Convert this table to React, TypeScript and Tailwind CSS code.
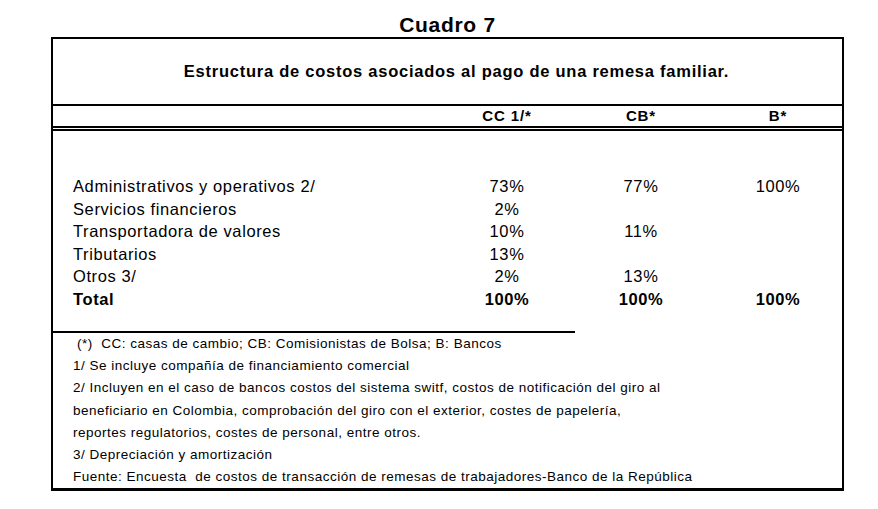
import React from 'react';

interface CostRow {
    label: string;
    cc: string;
    cb: string;
    b: string;
    bold?: boolean;
}

const rows: CostRow[] = [
    { label: 'Administrativos y operativos 2/', cc: '73%', cb: '77%', b: '100%' },
    { label: 'Servicios financieros', cc: '2%', cb: '', b: '' },
    { label: 'Transportadora de valores', cc: '10%', cb: '11%', b: '' },
    { label: 'Tributarios', cc: '13%', cb: '', b: '' },
    { label: 'Otros 3/', cc: '2%', cb: '13%', b: '' },
    { label: 'Total', cc: '100%', cb: '100%', b: '100%', bold: true },
];

const notes: string[] = [
    '1/ Se incluye compañía de financiamiento comercial',
    '2/ Incluyen en el caso de bancos costos del sistema switf, costos de notificación del giro al',
    'beneficiario en Colombia, comprobación del giro con el exterior, costes de papelería,',
    'reportes regulatorios, costes de personal, entre otros.',
    '3/ Depreciación y amortización',
    'Fuente: Encuesta  de costos de transacción de remesas de trabajadores-Banco de la República',
];

const grid = 'grid grid-cols-[387px_134px_134px_134px]';

const App: React.FC = () => {
    return (
        <div className="w-[878px] h-[509px] bg-white text-black font-['Liberation_Sans',Arial,sans-serif]">
            {/* Title */}
            <div className="w-[793px] ml-[51px] pt-[13px] h-[37px] text-center text-[21px] leading-[24px] font-bold tracking-[0.7px]">
                Cuadro 7
            </div>

            <div className="w-[793px] ml-[51px] border-x-2 border-t-2 border-b-[3px] border-black">
                {/* Subtitle */}
                <div className="h-[67px] pl-[18px] border-b-2 border-black flex items-center justify-center text-[16.5px] font-bold tracking-[0.75px]">
                    Estructura de costos asociados al pago de una remesa familiar.
                </div>

                {/* Header */}
                <div className={`${grid} h-[20px] items-center text-[15px] font-bold tracking-[0.9px] leading-[20px]`}>
                    <div></div>
                    <div className="text-center">CC 1/*</div>
                    <div className="text-center">CB*</div>
                    <div className="text-center pl-[6px]">B*</div>
                </div>
                <div className="h-[5px] border-y-2 border-black"></div>

                {/* Body */}
                <div className="h-[200px] pt-[44px] text-[16.5px] tracking-[0.6px] leading-[22.6px]">
                    {rows.map(row => (
                        <div key={row.label} className={`${grid} ${row.bold ? 'font-bold' : ''}`}>
                            <div className="pl-[20px]">{row.label}</div>
                            <div className="text-center">{row.cc}</div>
                            <div className="text-center">{row.cb}</div>
                            <div className="text-center pl-[6px]">{row.b}</div>
                        </div>
                    ))}
                </div>

                {/* Notes */}
                <div className="w-[522px] h-[2px] bg-black"></div>
                <div className="text-[13.5px] tracking-[0.5px] leading-[22.2px] whitespace-pre">
                    <div className="pl-[24px]">(*)  CC: casas de cambio; CB: Comisionistas de Bolsa; B: Bancos</div>
                    {notes.map(note => (
                        <div key={note} className="pl-[20px]">{note}</div>
                    ))}
                </div>
            </div>
        </div>
    );
};

export default App;
